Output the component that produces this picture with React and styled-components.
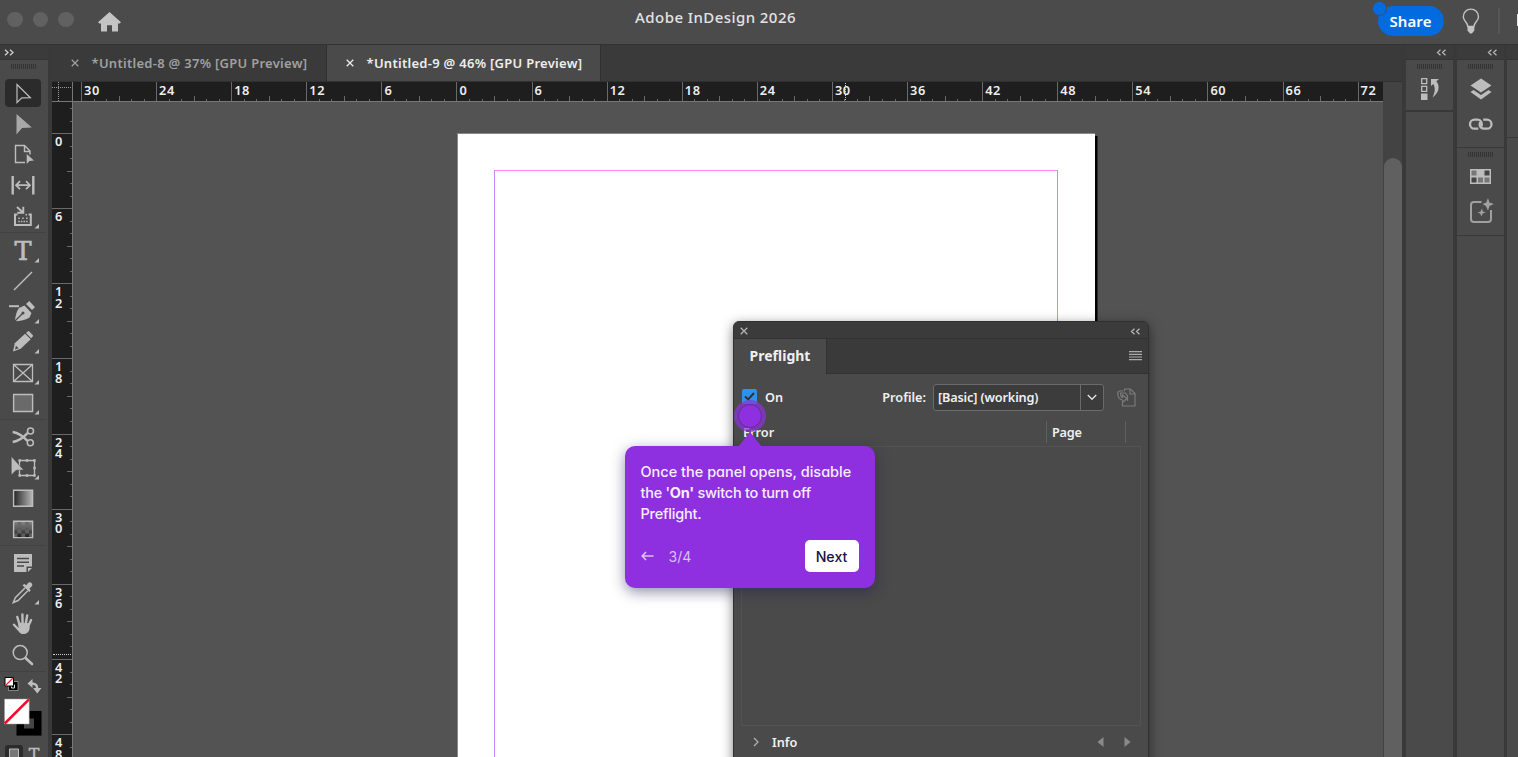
import React from "react"
import styled, { createGlobalStyle } from "styled-components"

const GlobalStyle = createGlobalStyle`
  * {
    box-sizing: border-box;
  }

  body {
    margin: 0;
    overflow: hidden;
    background: #4b4b4b;
    color: #eee;
    font-family: "Noto Sans", "Open Sans", sans-serif;
    font-size: 13px;
  }

  svg {
    display: block;
    flex: none;
  }
`

const Screen = styled.div`
  position: relative;
  display: flex;
  flex-direction: column;
  width: 1518px;
  height: 757px;
  overflow: hidden;
`

/* ---------- title bar ---------- */

const TitleBar = styled.header`
  flex: none;
  display: grid;
  grid-template-columns: 1fr auto 1fr;
  height: 45px;
  background: #4b4b4b;
  border-bottom: 1px solid #333;
`

const TitleLeft = styled.div`
  display: flex;
  align-items: center;
  height: 39px;
  padding-left: 7px;
`

const Light = styled.span`
  width: 15.5px;
  height: 15.5px;
  margin-right: 10px;
  border-radius: 50%;
  background: #616161;
`

const HomeIcon = styled.svg`
  margin: 4px 0 0 14.5px;
`

const Title = styled.h1`
  margin: 0;
  padding-right: 87px;
  color: #e3e3e3;
  font-size: 15px;
  font-weight: 500;
  line-height: 34px;
  letter-spacing: 0.43px;
  white-space: nowrap;
`

const TitleRight = styled.div`
  display: flex;
  justify-content: flex-end;
  height: 43px;
`

const Share = styled.button`
  position: relative;
  width: 66px;
  height: 30px;
  margin: 6px 18px 0 0;
  padding: 0;
  border: 0;
  border-radius: 15px;
  background: #026be0;
  color: #fff;
  font: 600 15px "Noto Sans", sans-serif;
  letter-spacing: 0.1px;
`

const ShareDot = styled.span`
  position: absolute;
  top: -5px;
  left: -6px;
  width: 15px;
  height: 15px;
  border: 1.5px solid #4b4b4b;
  border-radius: 50%;
  background: #026be0;
`

const TitleDivider = styled.span`
  width: 2px;
  height: 26px;
  margin: 8px 17px 0 18px;
  background: #575757;
`

const ClippedMark = styled.span`
  width: 1.5px;
  height: 12px;
  margin-top: 14px;
  background: #e8e8e8;
`

/* ---------- shell ---------- */

const Workspace = styled.div`
  flex: 1;
  display: flex;
  min-height: 0;
  background: #393939;
`

const Toolbox = styled.aside`
  flex: none;
  display: flex;
  flex-direction: column;
  width: 48px;
  margin-right: 4px;
  background: #4a4a4a;
`

const StripHeader = styled.div`
  flex: none;
  display: flex;
  align-items: center;
  justify-content: ${(p) => (p.$end ? "flex-end" : "flex-start")};
  height: 15px;
  padding: ${(p) => (p.$end ? "0 6px 0 0" : "0 0 0 4px")};
  background: #3b3b3b;
  border-bottom: 1px solid #333;
`

const Grip = styled.div`
  flex: none;
  width: 25px;
  height: 5px;
  margin: ${(p) => p.$margin || "4px auto 0"};
  background: repeating-linear-gradient(90deg, #343434 0 1px, #484848 1px 2px);
`

const ToolGroup = styled.div`
  flex: none;
  width: 46px;
  padding-top: ${(p) => p.$top}px;
  padding-bottom: ${(p) => p.$bottom || 0}px;
  border-bottom: 1px solid #424242;
`

const ToolSlot = styled.div`
  position: relative;
  height: ${(p) => p.$height}px;

  &::before {
    content: "";
    display: ${(p) => (p.$selected ? "block" : "none")};
    position: absolute;
    inset: 0 5px 2px;
    border-radius: 4px;
    background: #2b2b2b;
  }
`

const ToolSvg = styled.svg`
  position: relative;
`

const Document = styled.main`
  flex: none;
  display: flex;
  flex-direction: column;
  width: 1350px;
`

const Tabs = styled.div`
  flex: none;
  display: flex;
  height: 37px;
  background: #3a3a3a;
  border-bottom: 1px solid #313131;
`

const Tab = styled.div`
  display: flex;
  align-items: center;
  gap: 13px;
  width: ${(p) => (p.$active ? 274 : 275)}px;
  padding: 0 0 1px 18.5px;
  background: ${(p) => (p.$active ? "#4a4a4a" : "transparent")};
  border-right: 1px solid #303030;
  color: ${(p) => (p.$active ? "#eeeeee" : "#a0a0a0")};
  font-size: 13px;
  font-weight: 600;
  letter-spacing: 0.28px;
  white-space: nowrap;
`

const DocumentBody = styled.div`
  flex: 1;
  display: grid;
  grid-template-columns: 21px 1310px 19px;
  grid-template-rows: 20px 1fr;
  min-height: 0;
`

const Corner = styled.div`
  background: #1e1e1e;
  border-right: 1px solid #777;
  border-bottom: 1px solid #777;
`

const HRuler = styled.div`
  display: flex;
  position: relative;
  overflow: hidden;
  padding-left: 8px;
  background: #1e1e1e;
  border-bottom: 1px solid #777;
`

const VRuler = styled.div`
  display: flex;
  flex-direction: column;
  position: relative;
  overflow: hidden;
  background: #1e1e1e;
  border-right: 1px solid #777;
`

const HSegment = styled.div`
  flex: none;
  display: flex;
  position: relative;
  align-items: flex-end;
  width: 75.1px;
`

const VSegment = styled.div`
  flex: none;
  display: flex;
  flex-direction: column;
  position: relative;
  align-items: flex-end;
  height: ${(p) => p.$height || 75.15}px;
`

const HTick = styled.i`
  width: 12.517px;
  height: ${(p) => p.$length}px;
  border-left: 1px solid #6a6a6a;
`

const VTick = styled.i`
  flex: none;
  height: 12.525px;
  width: ${(p) => p.$length}px;
  border-top: 1px solid #6a6a6a;
`

const HLabel = styled.span`
  position: absolute;
  top: 0;
  left: 3px;
  font-size: 12.8px;
  font-weight: 600;
  line-height: 16px;
  letter-spacing: 0.6px;
`

const VLabel = styled.span`
  position: absolute;
  top: 3px;
  left: 3px;
  width: 8px;
  font-size: 12.8px;
  font-weight: 600;
  line-height: 11.5px;
  word-break: break-all;
`

const CursorMark = styled.span`
  position: absolute;
  ${(p) =>
    p.$vertical
      ? "top: 552px; left: 1px; width: 18px; border-top: 1px dotted #ccc;"
      : "left: 772px; top: 1px; height: 17px; border-left: 1px dotted #ccc;"}
`

const Canvas = styled.div`
  overflow: hidden;
  padding: 31px 0 0 384px;
  background: #535353;
`

const Page = styled.div`
  width: 638px;
  height: 700px;
  padding: 36px 37px 0 36px;
  background: #fff;
  border-top: 1px solid #888;
  border-left: 1px solid #888;
  box-shadow: 2.5px 3px 0 #000;
`

const MarginFrame = styled.div`
  width: 564px;
  height: 700px;
  border: 1px solid #c58cf8;
  border-top-color: #ff85fb;
`

const ScrollHead = styled.div`
  background: #434343;
`

const ScrollTrack = styled.div`
  padding: 56px 0 0 1px;
  background: #434343;
`

const ScrollThumb = styled.div`
  height: 620px;
  border-radius: 9px;
  background: #606060;
`

const Dock = styled.aside`
  flex: none;
  display: flex;
  flex-direction: column;
  width: ${(p) => p.$width}px;
  margin-left: ${(p) => p.$gap}px;
  background: #4a4a4a;
`

const DockGroup = styled.div`
  display: flex;
  flex-direction: column;
  align-items: center;
  height: ${(p) => p.$height}px;
  border-bottom: ${(p) => (p.$thick ? 2 : 1)}px solid #383838;
`

const DockIcon = styled.svg`
  margin-top: ${(p) => p.$top}px;
`

/* ---------- preflight panel ---------- */

const Panel = styled.section`
  position: absolute;
  top: 321px;
  left: 733px;
  width: 416px;
  height: 460px;
  border: 1px solid #303030;
  border-radius: 6px 6px 0 0;
  background: #4a4a4a;
  box-shadow: 0 3px 12px rgba(0, 0, 0, 0.5);
  overflow: hidden;
  color: #f0f0f0;
  font-size: 12.7px;
  font-weight: 600;
`

const PanelBar = styled.div`
  display: flex;
  align-items: center;
  justify-content: space-between;
  height: 17px;
  padding: 2px 7px 0 6px;
  background: #3b3b3b;
  border-bottom: 1px solid #323232;
`

const PanelTabs = styled.div`
  display: flex;
  justify-content: space-between;
  height: 35px;
  background: #3a3a3a;
`

const PanelTab = styled.div`
  width: 93px;
  padding-left: 15.5px;
  background: #4a4a4a;
  border-right: 1px solid #323232;
  font-size: 14px;
  font-weight: 700;
  line-height: 33px;
`

const PanelMenu = styled.div`
  flex: 1;
  display: flex;
  justify-content: flex-end;
  padding: 12px 6.5px 0 0;
  border-bottom: 1px solid #323232;
`

const Options = styled.div`
  display: flex;
  align-items: center;
  height: 46px;
  padding: 0 12px 0 8px;
`

const Checkbox = styled.span`
  display: grid;
  place-items: center;
  width: 15px;
  height: 15px;
  margin: -1px 8px 0 0;
  border-radius: 2px;
  background: #2d92ec;
`

const ProfileLabel = styled.span`
  margin-left: auto;
  margin-right: 7px;
`

const Select = styled.div`
  display: flex;
  justify-content: space-between;
  width: 171px;
  height: 27px;
  margin-right: 13px;
  padding-left: 4px;
  border: 1.5px solid #6b6b6b;
  border-radius: 3px;
  background: #3c3c3c;
  line-height: 25px;
  letter-spacing: -0.15px;
`

const SelectArrow = styled.span`
  display: grid;
  place-items: center;
  width: 23px;
  border-left: 1px solid #6b6b6b;
`

const ListHead = styled.div`
  display: flex;
  align-items: center;
  height: 21px;
  margin: 1px 0 4px;
  padding-left: 9px;
`

const PageHead = styled.span`
  width: 80px;
  margin-left: auto;
  margin-right: 22px;
  padding-left: 5px;
  border-left: 1.5px solid #606060;
  border-right: 1.5px solid #606060;
  line-height: 22px;
  letter-spacing: -0.2px;
`

const List = styled.div`
  height: 280px;
  margin: 0 7px;
  border: 1px solid #535353;
`

const PanelFooter = styled.div`
  display: flex;
  align-items: center;
  height: 32px;
  padding: 0 17px 0 19px;

  span {
    flex: 1;
    margin-left: 13px;
  }
`

/* ---------- walkthrough ---------- */

const Beacon = styled.span`
  position: absolute;
  top: 400px;
  left: 733.5px;
  width: 32px;
  height: 32px;
  border: 4.5px solid rgba(142, 48, 224, 0.7);
  border-radius: 50%;
  background: #8e30e0;
  background-clip: padding-box;

  &::after {
    content: "";
    position: absolute;
    inset: 0;
    border: 1px solid #612d96;
    border-radius: 50%;
  }
`

const Tip = styled.div`
  position: absolute;
  top: 446px;
  left: 624.5px;
  display: flex;
  flex-direction: column;
  justify-content: space-between;
  width: 250px;
  height: 142px;
  padding: 15px 16px 16px;
  border-radius: 10px;
  background: #8e30e0;
  box-shadow: 0 4px 14px rgba(36, 30, 88, 0.5);
  color: #f6eefd;
  font-family: Inter, sans-serif;
  font-feature-settings: "cv11";
  font-size: 14.5px;
  font-weight: 500;

  &::before {
    content: "";
    position: absolute;
    top: -14px;
    left: 113px;
    border: solid transparent;
    border-width: 0 12px 15px;
    border-bottom-color: #8e30e0;
  }
`

const TipText = styled.p`
  margin: 0;
  line-height: 21px;
  white-space: nowrap;
`

const TipLine = styled.span`
  display: block;
  letter-spacing: ${(p) => p.$spacing || 0}px;
`

const TipActions = styled.div`
  display: flex;
  align-items: center;
  gap: 15px;
  color: #d9c3ee;
  font-size: 14px;
  font-weight: 400;
`

const NextButton = styled.button`
  width: 54px;
  height: 32px;
  margin-left: auto;
  padding: 0;
  border: 0;
  border-radius: 5px;
  background: #fff;
  color: #1b1340;
  font: 500 14.2px Inter, sans-serif;
`

/* ---------- icons ---------- */

const ink = "#bdbdbd"

const Chevrons = ({ right }) => (
  <svg width="11" height="7" viewBox="0 0 11 7" fill="none" stroke={right ? "#d0d0d0" : "#b5b5b5"} strokeWidth="1.3">
    <path d={right ? "M1 .8 4 3.5 1 6.2M6 .8 9 3.5 6 6.2" : "M4.5.8 1.5 3.5l3 2.7M9.5.8l-3 2.7 3 2.7"} />
  </svg>
)

const Cross = ({ color, size = 8 }) => (
  <svg width={size} height={size} viewBox="0 0 9 9" stroke={color} strokeWidth="1.4">
    <path d="M.8.8l7.4 7.4M8.2.8.8 8.2" />
  </svg>
)

const Flyout = () => <path d="M39 22v4.500h-4.500z" fill={ink} />

const checks = []
for (let row = 0; row < 4; row++) {
  for (let col = 0; col < 5; col++) {
    if ((row + col) % 2) checks.push([13.5 + col * 3.9, 7.5 + row * 4])
  }
}

const tools = {
  select: <path d="M17 5.5v18l4.8-4.6 8.6-.2z" fill="none" stroke={ink} strokeWidth="1.2" />,
  direct: <path d="M16.500 5V25.500l5.500-6.500 9.800-.4z" fill="#a8a8a8" />,
  page: (
    <>
      <path d="M25 22.500h-9.500V5.500h9l5.500 5.500v3.500M24.500 5.500v6H30" fill="none" stroke={ink} strokeWidth="1.4" />
      <path d="M26.700 14v10l2.800-3 4.500-.6z" fill={ink} />
    </>
  ),
  gap: (
    <g fill="none" stroke={ink}>
      <path d="M12.700 5v18.500M33.300 5v18.500" strokeWidth="2.400" />
      <path d="M16.500 14.200h13M20 10.200l-4 4 4 4M26 10.200l4 4-4 4" strokeWidth="1.700" />
    </g>
  ),
  collector: (
    <>
      <g fill="none" stroke={ink}>
        <path d="M17.500 12.500h-2.500v10.500h15.800V12.500h-2.300" strokeWidth="2" />
        <path d="M17 5l5.500 5M23.300 4.800v5.900h-6" strokeWidth="1.900" />
      </g>
      <path d="M18.300 15.500h1.500v1.500h-1.500zM22.200 15.500h1.500v1.500h-1.500zM26.100 15.500h1.500v1.500h-1.500zM18.300 18.800h1.500v1.500h-1.500zM20.900 18.800h1.500v1.500h-1.500zM23.500 18.800h1.500v1.500h-1.500zM26.100 18.800h1.500v1.500h-1.500zM25.500 12h1.500v1.500h-1.500z" fill={ink} />
      <Flyout />
    </>
  ),
  type: (
    <>
      <text x="23" y="23.500" textAnchor="middle" fill={ink} fontFamily="DejaVu Serif, serif" fontSize="25.500" stroke={ink} strokeWidth=".7">T</text>
      <Flyout />
    </>
  ),
  line: <path d="M14 24 32 6" stroke={ink} strokeWidth="1.500" />,
  pen: (
    <>
      <path d="M9 8.200h10v2H9z" fill={ink} />
      <path d="M15 23.500c.3-4.500 1.500-9 4-12.500l5.500-2.500 7 7.500-2 4.500c-3.500 2.300-7.500 3.300-12.700 3.700z" fill={ink} />
      <path d="M26 7l3.300-3L35 10.300 32 13z" fill={ink} />
      <path d="M15 24l7.500-7.500" stroke="#4a4a4a" strokeWidth="1.200" />
      <circle cx="23" cy="16" r="1.500" fill="#4a4a4a" />
      <Flyout />
    </>
  ),
  pencil: (
    <>
      <path d="M13 24.500l1.800-8.200L25 6.800l5.700 5.500-10 9.500z" fill={ink} />
      <path d="M15 22.500l.9-3.800 2.800 2.600z" fill="#4a4a4a" />
      <path d="M26 6l1.800-1.600q.8-.6 1.500 0l3.400 3.600q.6.8 0 1.500L31 11.300z" fill={ink} />
      <Flyout />
    </>
  ),
  frame: (
    <>
      <path d="M13.500 6.500h19v17h-19zM13.500 6.500l19 17M32.500 6.500l-19 17" fill="none" stroke={ink} strokeWidth="1.300" />
      <Flyout />
    </>
  ),
  rect: (
    <>
      <path d="M13.600 6.500h19v17h-19z" fill="#6a6a6a" stroke={ink} strokeWidth="1.400" />
      <Flyout />
    </>
  ),
  scissors: (
    <g fill="none" stroke={ink}>
      <circle cx="30.500" cy="9" r="3" strokeWidth="1.500" />
      <circle cx="30.300" cy="20.800" r="3" strokeWidth="1.500" />
      <path d="M12.700 10c5 .8 9.800 3.500 14.800 8.900M12.700 20c5-.8 9.800-3.500 14.800-8.900" strokeWidth="2.300" />
    </g>
  ),
  transform: (
    <>
      <path d="M19.500 7.500h15v15h-15z" fill="none" stroke={ink} strokeWidth="1.300" />
      <path d="M18.500 6.300h2.400v2.400h-2.400zM25.800 6.300h2.400v2.400h-2.400zM33.300 6.300h2.400v2.400h-2.400zM33.300 13.800h2.400v2.400h-2.400zM18.500 21.300h2.400v2.400h-2.400zM25.800 21.300h2.400v2.400h-2.400zM33.300 21.300h2.400v2.400h-2.400z" fill={ink} />
      <path d="M11.300 3.500V22l4.800-4.700 7.500-.4z" fill={ink} stroke="#4a4a4a" strokeWidth=".5" />
      <Flyout />
    </>
  ),
  gradient: (
    <>
      <defs>
        <linearGradient id="ramp">
          <stop stopColor="#252525" />
          <stop offset="1" stopColor="#b8b8b8" />
        </linearGradient>
      </defs>
      <path d="M13.600 7.300h19v16h-19z" fill="url(#ramp)" stroke={ink} strokeWidth="1.400" />
    </>
  ),
  checker: (
    <>
      <defs>
        <linearGradient id="fade" x2="0" y2="1">
          <stop stopColor="#8a8a8a" />
          <stop offset="1" stopColor="#1c1c1c" />
        </linearGradient>
        <linearGradient id="fadeDark" gradientUnits="userSpaceOnUse" x1="0" y1="7" x2="0" y2="24">
          <stop stopColor="#6a6a6a" />
          <stop offset="1" stopColor="#5c5c5c" />
        </linearGradient>
      </defs>
      <path d="M13.600 7.300h19v16.300h-19z" fill="url(#fade)" />
      {checks.map(([x, y]) => (
        <rect key={`${x}-${y}`} x={x} y={y} width="3.9" height="4" fill="url(#fadeDark)" />
      ))}
      <path d="M13.600 7.300h19v16.300h-19z" fill="none" stroke={ink} strokeWidth="1.400" />
    </>
  ),
  note: (
    <>
      <path d="M14 6h18v12.500h-5.500V24H14zM28 20h4l-4 4z" fill={ink} />
      <path d="M17 10.500h12M17 14.300h12M17 18h7" stroke="#4a4a4a" strokeWidth="1.400" />
    </>
  ),
  dropper: (
    <>
      <path d="M25 10l-9.700 9.700-2 4.800 4.800-2 9.700-9.700" fill="none" stroke={ink} strokeWidth="1.500" />
      <path d="M22.500 7.300l1.800-1.300 2 1.300 2-2.500c2-1.900 5.300 1.300 3.500 3.500l-2.300 2.200 1.200 2-1.500 1.600z" fill={ink} />
      <Flyout />
    </>
  ),
  hand: (
    <>
      <g stroke={ink} strokeWidth="2.400" strokeLinecap="round">
        <path d="M19.500 15.500l-2.200-7.500M22.600 14.500l-.2-9M25.800 14.500l1.400-8M28.500 16.500l2.600-5.500M18.500 20.500l-4.500-4.800" />
      </g>
      <path d="M18 13.500l11.500.8.2 4.200c-.3 4-2.300 6.500-6.300 6.500-3.300 0-4.500-1.800-7.300-6.500l2.500.5z" fill={ink} />
    </>
  ),
  zoom: (
    <>
      <circle cx="20.200" cy="12.600" r="7" fill="none" stroke={ink} strokeWidth="1.500" />
      <path d="M25.500 18l6.500 6" stroke={ink} strokeWidth="2.600" strokeLinecap="round" />
    </>
  ),
}

const toolGroups = [
  { top: 9.5, size: 30.8, items: ["select", "direct", "page", "gap", "collector"] },
  { top: 2.5, size: 30.5, items: ["type", "line", "pen", "pencil", "frame", "rect"] },
  { top: 2.5, size: 30.4, bottom: 1, items: ["scissors", "transform", "gradient", "checker"] },
  { top: 1.5, size: 30.7, bottom: 1, items: ["note", "dropper", "hand", "zoom"] },
]

const Swatches = () => (
  <svg width="46" height="85" viewBox="0 672 46 85">
    <path d="M8.500 681.500h9.500v9H8.500z" fill="#000" stroke="#ddd" strokeWidth=".5" />
    <path d="M11.500 685h3v3h-3z" fill="none" stroke="#ddd" />
    <path d="M5 677.500h8.500v8.500H5z" fill="#fff" stroke="#000" />
    <path d="M5.500 685.500l7.500-7.500" stroke="#ff2040" strokeWidth="1.300" />
    <path d="M31 683.500c5 0 6.300 1.500 6.300 6" fill="none" stroke={ink} strokeWidth="2.400" />
    <path d="M32.500 679v9l-5-4.500zM33 688h8.500l-4.200 5.500z" fill={ink} />
    <path d="M16.500 711h25v24.600h-25z" fill="#000" />
    <path d="M24 718.500h10v10H24z" fill="#454545" />
    <path d="M4.500 699h24.700v25H4.500z" fill="#fff" stroke="#999" strokeWidth=".5" />
    <path d="M4.800 723.500 29 699.400" stroke="#f5082c" strokeWidth="2.600" />
    <rect x="5" y="745" width="18" height="18" rx="3" fill="#2b2b2b" />
    <path d="M9.500 749h9v12h-9z" fill="#777" stroke={ink} />
    <text x="34" y="759.500" textAnchor="middle" fill={ink} fontFamily="DejaVu Serif, serif" fontSize="16" stroke={ink} strokeWidth=".4">T</text>
  </svg>
)

const hLabels = [30, 24, 18, 12, 6, 0, 6, 12, 18, 24, 30, 36, 42, 48, 54, 60, 66, 72]
const vLabels = [0, 6, 12, 18, 24, 30, 36, 42, 48]

// full-height line, then short marks with a longer one in the middle
const lengths = [19, 2, 2, 5, 2, 2]

const HorizontalRuler = () => (
  <HRuler>
    {hLabels.map((label, i) => (
      <HSegment key={i}>
        {lengths.map((length, n) => (
          <HTick key={n} $length={length} />
        ))}
        <HLabel>{label}</HLabel>
      </HSegment>
    ))}
    <CursorMark />
  </HRuler>
)

const VerticalRuler = () => (
  <VRuler>
    <VSegment $height={31}>
      <VTick $length={0} style={{ height: 6 }} />
      <VTick $length={2} />
      <VTick $length={2} />
    </VSegment>
    {vLabels.map((label) => (
      <VSegment key={label}>
        {lengths.map((length, n) => (
          <VTick key={n} $length={n === 0 ? 20 : length} />
        ))}
        <VLabel>{label}</VLabel>
      </VSegment>
    ))}
    <CursorMark $vertical />
  </VRuler>
)

const Tools = () => (
  <Toolbox>
    <StripHeader>
      <Chevrons right />
    </StripHeader>
    <Grip $margin="4px 0 0 11px" />
    {toolGroups.map((group) => (
      <ToolGroup key={group.items[0]} $top={group.top} $bottom={group.bottom}>
        {group.items.map((name) => (
          <ToolSlot key={name} $height={group.size} $selected={name === "select"}>
            <ToolSvg width="46" height="30" viewBox="0 0 46 30">
              {tools[name]}
            </ToolSvg>
          </ToolSlot>
        ))}
      </ToolGroup>
    ))}
    <Swatches />
  </Toolbox>
)

const Docks = () => (
  <>
    <Dock $width={47} $gap={4}>
      <StripHeader $end>
        <Chevrons />
      </StripHeader>
      <DockGroup $height={52} $thick>
        <Grip />
        <DockIcon $top={9} width="22" height="23" viewBox="0 0 22 23">
          <path d="M2.700.7h5v5h-5zM2.700 8.300h5v5h-5z" fill="none" stroke={ink} strokeWidth="1.300" />
          <path d="M2 15.500h6.500V22H2z" fill={ink} />
          <path d="M12 8V1h8l-2.600 2.300c4 5 2.500 12-4 16.200 2.700-5 3.200-9.500.9-13.500z" fill={ink} />
        </DockIcon>
      </DockGroup>
    </Dock>
    <Dock $width={47} $gap={4}>
      <StripHeader $end>
        <Chevrons />
      </StripHeader>
      <DockGroup $height={88}>
        <Grip />
        <DockIcon $top={9} width="24" height="23" viewBox="0 0 24 23" fill={ink}>
          <path d="M12 .5 22.500 7.500 12 14.500 1.500 7.500z" />
          <path d="M1.500 14l3-2 7.500 5 7.500-5 3 2L12 21.500z" />
        </DockIcon>
        <DockIcon $top={17} width="26" height="13" viewBox="0 0 26 13" fill="none" stroke={ink} strokeWidth="2.300">
          <path d="M13.500 8.500c1-3.500-.5-6.800-3.800-6.800H6.500a4.500 4.500 0 0 0 0 9h3.800" />
          <path d="M12 4c-1 3.500.5 6.700 3.800 6.700h3.200a4.500 4.500 0 0 0 0-9h-3.800" />
        </DockIcon>
      </DockGroup>
      <DockGroup $height={88}>
        <Grip />
        <DockIcon $top={12} width="21" height="15" viewBox="0 0 21 15">
          <path d="M0 0h21v15H0z" fill={ink} />
          <path d="M1.500 1.500h5v5h-5z" fill="#777" />
          <path d="M14.500 1.500h5v5h-5zM1.500 8.500h5v5h-5z" fill="#444" />
          <path d="M8 8.500h5v5H8zM14.500 8.500h5v5h-5z" fill="#777" />
        </DockIcon>
        <DockIcon $top={13.5} width="26" height="26" viewBox="0 0 26 26">
          <path d="M13.500 4H6a3 3 0 0 0-3 3V21A3 3 0 0 0 6 24h14A3 3 0 0 0 23 21v-9" fill="none" stroke="#a0a0a0" strokeWidth="2" />
          <path d="M20 0l1.400 4.500L26 6l-4.500 2L20 12.500 17.900 8 14.500 6l3.800-1.500zM14 10.500l.8 3 3 .8-3 1.200-1.600 3-.9-3L9.500 14.800l3-1.300z" fill="#a0a0a0" />
        </DockIcon>
      </DockGroup>
    </Dock>
    <Dock $width={12} $gap={3}>
      <StripHeader />
      <DockGroup $height={78} />
    </Dock>
  </>
)

const PreflightPanel = () => (
  <Panel>
    <PanelBar>
      <Cross color="#b5b5b5" />
      <Chevrons />
    </PanelBar>
    <PanelTabs>
      <PanelTab>Preflight</PanelTab>
      <PanelMenu>
        <svg width="13" height="10" viewBox="0 0 13 10" stroke="#aaa" strokeWidth="1.200">
          <path d="M0 .6h13M0 3.300h13M0 6h13M0 8.700h13" />
        </svg>
      </PanelMenu>
    </PanelTabs>
    <Options>
      <Checkbox>
        <svg width="11" height="9" viewBox="0 0 11 9" fill="none" stroke="#303030" strokeWidth="1.900">
          <path d="M1 4.500 4.200 7.500 10 1" />
        </svg>
      </Checkbox>
      On
      <ProfileLabel>Profile:</ProfileLabel>
      <Select>
        [Basic] (working)
        <SelectArrow>
          <svg width="10" height="7" viewBox="0 0 10 7" fill="none" stroke="#ddd" strokeWidth="1.400">
            <path d="M.8 1 5 5.300 9.200 1" />
          </svg>
        </SelectArrow>
      </Select>
      <svg width="19" height="19" viewBox="0 0 19 19" fill="none" stroke="#7a7a7a" strokeWidth="1.200">
        <path d="M7.500 3V1h6l4.500 4.500V18H5.500v-3M13 1v5h5" />
        <path d="M6.500 3H3C1.500 3 .8 4 .8 5.500c0 3.500 1.700 6 4.700 6.500v2.500l4.500-4-4.500-3.500v2.300C4 9 3.500 7 3.500 5h5l2 3v5" />
      </svg>
    </Options>
    <ListHead>
      Error
      <PageHead>Page</PageHead>
    </ListHead>
    <List />
    <PanelFooter>
      <svg width="6" height="10" viewBox="0 0 6 10" fill="none" stroke="#b0b0b0" strokeWidth="1.300">
        <path d="M1 1l4 4-4 4" />
      </svg>
      <span>Info</span>
      <svg width="34" height="10" viewBox="0 0 34 10" fill="#8a8a8a">
        <path d="M6.500 0v10L.5 5zM27.500 0v10l6-5z" />
      </svg>
    </PanelFooter>
  </Panel>
)

const Walkthrough = () => (
  <>
    <Beacon />
    <Tip>
      <TipText>
        <TipLine>Once the panel opens, disable</TipLine>
        <TipLine $spacing={-0.25}>
          the '<b>On'</b> switch to turn off
        </TipLine>
        <TipLine $spacing={-0.2}>Preflight.</TipLine>
      </TipText>
      <TipActions>
        <svg width="13" height="10" viewBox="0 0 13 10" fill="none" stroke="#d9c3ee" strokeWidth="1.600">
          <path d="M12.500 5H1.500M5 1 1.200 5 5 9" />
        </svg>
        3/4
        <NextButton>Next</NextButton>
      </TipActions>
    </Tip>
  </>
)

const App = () => (
  <Screen>
    <GlobalStyle />
    <TitleBar>
      <TitleLeft>
        <Light />
        <Light />
        <Light />
        <HomeIcon width="23" height="20" viewBox="0 0 23 20" fill="#c4c4c4">
          <path d="M11.500 0 23 10.300l-1.300 1.200H20V19.500h-6v-6.300H9v6.300H3v-8H1.300L0 10.300z" />
        </HomeIcon>
      </TitleLeft>
      <Title>Adobe InDesign 2026</Title>
      <TitleRight>
        <Share>
          Share
          <ShareDot />
        </Share>
        <svg width="18" height="35" viewBox="0 0 18 35">
          <path d="M5.800 26.500c0-4.500-4.500-5-4.500-9.800a7.600 7.600 0 0 1 15.200 0c0 4.800-4.500 5.300-4.500 9.800z" fill="none" stroke="#c4c4c4" strokeWidth="1.400" />
          <path d="M5.500 26.500h6.800v4l-2.400 3H8l-2.500-3z" fill="#c4c4c4" />
        </svg>
        <TitleDivider />
        <ClippedMark />
      </TitleRight>
    </TitleBar>
    <Workspace>
      <Tools />
      <Document>
        <Tabs>
          <Tab>
            <Cross color="#a0a0a0" />
            *Untitled-8 @ 37% [GPU Preview]
          </Tab>
          <Tab $active>
            <Cross color="#eee" />
            *Untitled-9 @ 46% [GPU Preview]
          </Tab>
        </Tabs>
        <DocumentBody>
          <Corner>
            <svg width="20" height="19" viewBox="0 0 20 19" stroke="#999" strokeDasharray="1 1">
              <path d="M0 5.500h20M6.500 0v19" />
            </svg>
          </Corner>
          <HorizontalRuler />
          <ScrollHead />
          <VerticalRuler />
          <Canvas>
            <Page>
              <MarginFrame />
            </Page>
          </Canvas>
          <ScrollTrack>
            <ScrollThumb />
          </ScrollTrack>
        </DocumentBody>
      </Document>
      <Docks />
    </Workspace>
    <PreflightPanel />
    <Walkthrough />
  </Screen>
)

export default App
